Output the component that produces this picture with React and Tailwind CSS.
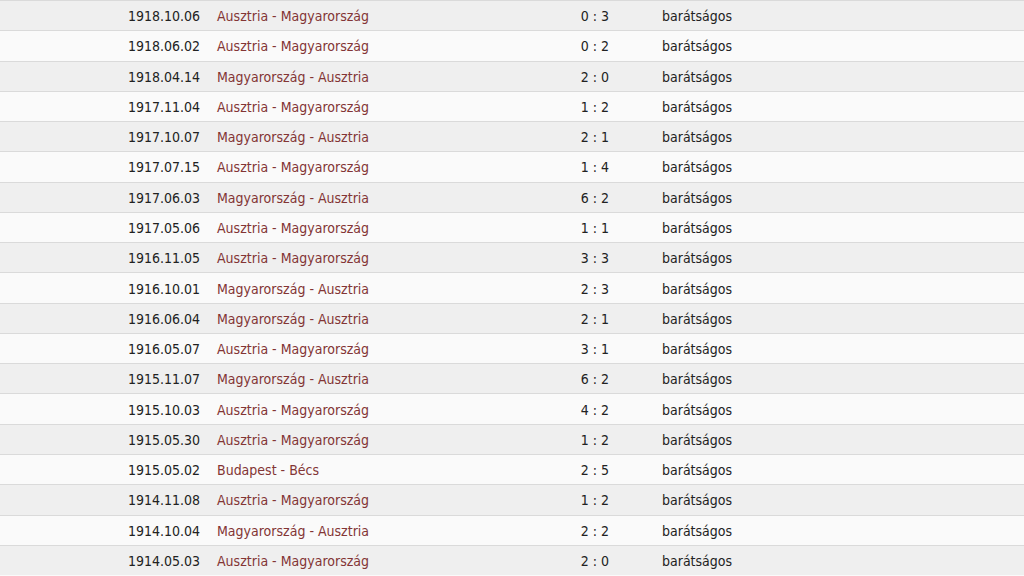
const matches = [
  ["1918.10.06", "Ausztria - Magyarország", "0 : 3"],
  ["1918.06.02", "Ausztria - Magyarország", "0 : 2"],
  ["1918.04.14", "Magyarország - Ausztria", "2 : 0"],
  ["1917.11.04", "Ausztria - Magyarország", "1 : 2"],
  ["1917.10.07", "Magyarország - Ausztria", "2 : 1"],
  ["1917.07.15", "Ausztria - Magyarország", "1 : 4"],
  ["1917.06.03", "Magyarország - Ausztria", "6 : 2"],
  ["1917.05.06", "Ausztria - Magyarország", "1 : 1"],
  ["1916.11.05", "Ausztria - Magyarország", "3 : 3"],
  ["1916.10.01", "Magyarország - Ausztria", "2 : 3"],
  ["1916.06.04", "Magyarország - Ausztria", "2 : 1"],
  ["1916.05.07", "Ausztria - Magyarország", "3 : 1"],
  ["1915.11.07", "Magyarország - Ausztria", "6 : 2"],
  ["1915.10.03", "Ausztria - Magyarország", "4 : 2"],
  ["1915.05.30", "Ausztria - Magyarország", "1 : 2"],
  ["1915.05.02", "Budapest - Bécs", "2 : 5"],
  ["1914.11.08", "Ausztria - Magyarország", "1 : 2"],
  ["1914.10.04", "Magyarország - Ausztria", "2 : 2"],
  ["1914.05.03", "Ausztria - Magyarország", "2 : 0"],
];

export default function App() {
  return (
    <div className="w-[1024px] h-[576px] overflow-hidden bg-[#fafafa] font-['DejaVu_Sans_Condensed','DejaVu_Sans',sans-serif] text-[14px] text-[#222]">
      {matches.map(([date, match, score], i) => (
        <div
          key={date}
          className={`flex items-center h-[30.28px] pt-[2px] border-t border-[#dadada] ${
            i % 2 === 0 ? "bg-[#efefef]" : "bg-[#fafafa]"
          }`}
        >
          <div className="w-[200px] text-right">{date}</div>
          <div className="w-[337px] pl-[17px] text-[#833535]">{match}</div>
          <div className="w-[116px] text-center">{score}</div>
          <div className="pl-[9px]">barátságos</div>
        </div>
      ))}
    </div>
  );
}
